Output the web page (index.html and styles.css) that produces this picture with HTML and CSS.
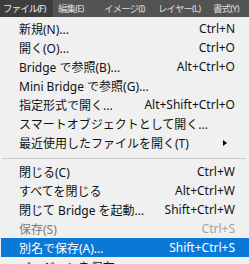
FILE: index.html
```html
<!DOCTYPE html>
<html lang="ja">
<head>
<meta charset="utf-8">
<link rel="stylesheet" href="styles.css">
</head>
<body>
<div class="menubar">
  <span class="mb-item active">ファイル(F)</span>
  <span class="mb-item">編集(E)</span>
  <span class="mb-item">イメージ(I)</span>
  <span class="mb-item">レイヤー(L)</span>
  <span class="mb-item">書式(Y)</span>
</div>
<div class="menu">
  <div class="row"><span class="label">新規(N)...</span><span class="sc">Ctrl+N</span></div>
  <div class="row"><span class="label">開く(O)...</span><span class="sc">Ctrl+O</span></div>
  <div class="row"><span class="label">Bridge で参照(B)...</span><span class="sc">Alt+Ctrl+O</span></div>
  <div class="row"><span class="label">Mini Bridge で参照(G)...</span><span class="sc"></span></div>
  <div class="row"><span class="label">指定形式で開く...</span><span class="sc">Alt+Shift+Ctrl+O</span></div>
  <div class="row"><span class="label">スマートオブジェクトとして開く...</span><span class="sc"></span></div>
  <div class="row"><span class="label">最近使用したファイルを開く(T)</span><span class="arrow"></span></div>
  <div class="sep"></div>
  <div class="row"><span class="label">閉じる(C)</span><span class="sc">Ctrl+W</span></div>
  <div class="row"><span class="label">すべてを閉じる</span><span class="sc">Alt+Ctrl+W</span></div>
  <div class="row"><span class="label">閉じて Bridge を起動...</span><span class="sc">Shift+Ctrl+W</span></div>
  <div class="row disabled"><span class="label">保存(S)</span><span class="sc">Ctrl+S</span></div>
  <div class="row selected"><span class="label">別名で保存(A)...</span><span class="sc">Shift+Ctrl+S</span></div>
  <div class="row"><span class="label">バージョンを保存...</span><span class="sc"></span></div>
</div>
</body>
</html>
```
FILE: styles.css
```css
html, body {
  margin: 0;
  padding: 0;
}
body {
  width: 249px;
  height: 264px;
  overflow: hidden;
  background: #f0f0f0;
  font-family: "Noto Sans", "Noto Sans CJK JP", sans-serif;
}
.menubar {
  height: 17px;
  background: #535353;
  display: grid;
  grid-template-columns: 53px 48px 54px 55px 1fr;
  color: #dcdcdc;
  font-size: 9.5px;
  letter-spacing: -0.9px;
  white-space: nowrap;
  overflow: hidden;
}
.mb-item {
  height: 17px;
  line-height: 17px;
  padding-left: 3px;
}
.mb-item:nth-child(2) {
  padding-left: 5px;
}
.mb-item.active {
  background: #3d3d3d;
  color: #ececec;
}
.menu {
  padding: 2px 0 0 1px;
  background: #f0f0f0;
}
.row {
  height: 19px;
  display: flex;
  align-items: center;
  justify-content: space-between;
  padding: 0 14px 0 18px;
  font-size: 12px;
  color: #111;
  white-space: nowrap;
}
.row.disabled {
  color: #7b7b7b;
}
.row.disabled .sc {
  color: #a3a3a3;
}
.row.selected {
  background: #0a78d7;
  color: #fff;
}
.arrow {
  width: 0;
  height: 0;
  border-top: 3.5px solid transparent;
  border-bottom: 3.5px solid transparent;
  border-left: 4px solid #000;
  margin-right: 8px;
}
.sep {
  height: 1px;
  background: #c8c8c8;
  margin: 6px 3px 3px 1px;
}
```
